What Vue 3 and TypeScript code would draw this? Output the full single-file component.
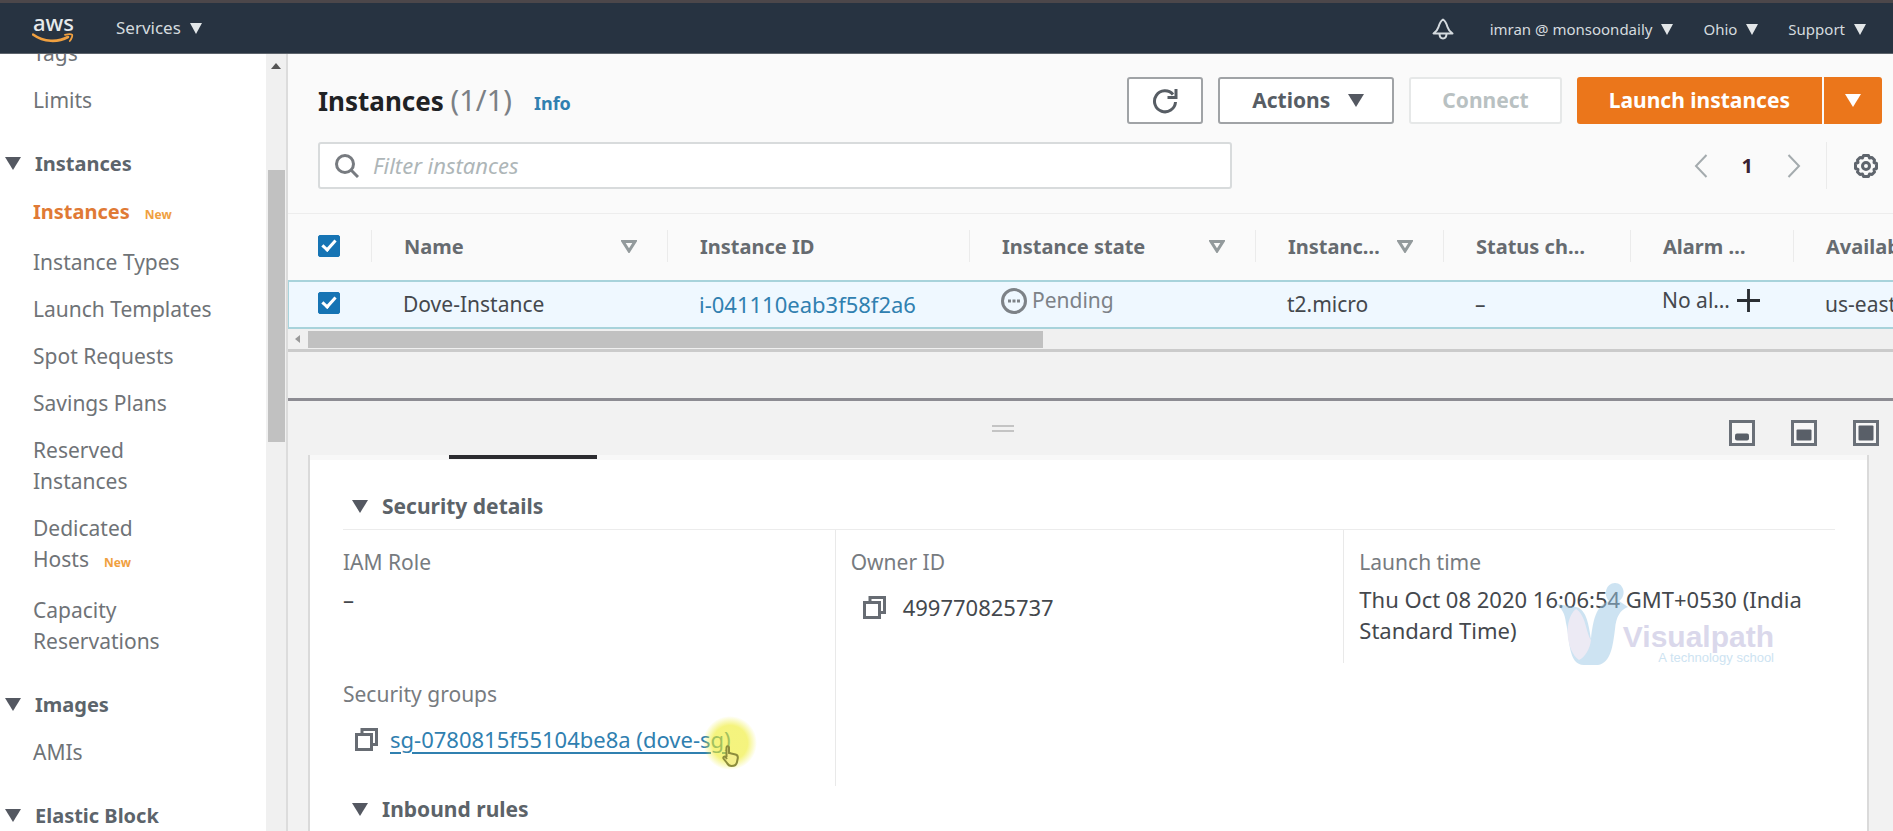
<script setup lang="ts">
import { ref } from 'vue'

interface NavItem {
  label: string
  active?: boolean
  isNew?: boolean
}
interface NavGroup {
  title?: string
  items: NavItem[]
}
interface Column {
  key: string
  label: string
  sortable?: boolean
}

const navGroups: NavGroup[] = [
  { items: [{ label: 'Tags' }, { label: 'Limits' }] },
  {
    title: 'Instances',
    items: [
      { label: 'Instances', active: true, isNew: true },
      { label: 'Instance Types' },
      { label: 'Launch Templates' },
      { label: 'Spot Requests' },
      { label: 'Savings Plans' },
      { label: 'Reserved Instances' },
      { label: 'Dedicated Hosts', isNew: true },
      { label: 'Capacity Reservations' },
    ],
  },
  { title: 'Images', items: [{ label: 'AMIs' }] },
  { title: 'Elastic Block', items: [] },
]

const accountMenus: string[] = ['imran @ monsoondaily', 'Ohio', 'Support']

const columns: Column[] = [
  { key: 'name', label: 'Name', sortable: true },
  { key: 'id', label: 'Instance ID' },
  { key: 'state', label: 'Instance state', sortable: true },
  { key: 'type', label: 'Instanc…', sortable: true },
  { key: 'status', label: 'Status ch…' },
  { key: 'alarm', label: 'Alarm …' },
  { key: 'zone', label: 'Availability Zone' },
]

const filter = ref('')
const allSelected = ref(true)
const rowSelected = ref(true)
</script>

<template>
  <div class="app">
    <header class="topbar">
      <a class="logo" href="#" aria-label="AWS home">
        <span class="logo-text">aws</span>
        <svg class="logo-smile" viewBox="0 0 42 11" aria-hidden="true">
          <path d="M1 1.5C12 9.500 26 9.500 36 4" fill="none" stroke="#f0a040" stroke-width="2.600" stroke-linecap="round" />
          <path d="M33 1.800C36 1 39 .8 40 1.600C40.800 2.600 39.500 6 37.800 8" fill="none" stroke="#f0a040" stroke-width="1.800" stroke-linecap="round" />
        </svg>
      </a>
      <button class="menu services" type="button">Services<svg class="caret" viewBox="0 0 12 11"><path d="M0 0H12L6 11Z" /></svg></button>
      <div class="account">
        <button class="bell" type="button" aria-label="Notifications">
          <svg viewBox="0 0 22 22" fill="none" stroke="currentColor" stroke-width="2" stroke-linejoin="round">
            <path d="M11 1.500C8.500 3 7.500 5.500 6.500 9C5.800 11.500 3.500 14 1.500 15.500H20.500C18.500 14 16.200 11.500 15.500 9C14.500 5.500 13.500 3 11 1.500Z" />
            <path d="M7.500 15.500C7.500 22 14.500 22 14.500 15.500" />
          </svg>
        </button>
        <button v-for="m in accountMenus" :key="m" class="menu" type="button">{{ m }}<svg class="caret" viewBox="0 0 12 11"><path d="M0 0H12L6 11Z" /></svg></button>
      </div>
    </header>

    <div class="body">
      <aside class="sidebar">
        <nav class="nav" aria-label="EC2">
          <section v-for="(g, i) in navGroups" :key="i" class="nav-group">
            <button v-if="g.title" class="nav-title" type="button">
              <svg class="tri" viewBox="0 0 16 13"><path d="M0 0H16L8 13Z" /></svg>{{ g.title }}
            </button>
            <ul v-if="g.items.length">
              <li v-for="item in g.items" :key="item.label" :class="{ fresh: item.isNew }">
                <a href="#" :class="{ active: item.active }">{{ item.label }}</a>
                <span v-if="item.isNew" class="new">New</span>
              </li>
            </ul>
          </section>
        </nav>
        <div class="vscroll" aria-hidden="true">
          <svg viewBox="0 0 10 6"><path d="M0 6H10L5 0Z" /></svg>
          <div class="vthumb"></div>
        </div>
      </aside>

      <main class="main">
        <section class="list">
          <div class="toolbar">
            <div class="row">
              <h1>Instances <span>(1/1)</span></h1>
              <a class="info" href="#">Info</a>
              <div class="actions">
                <button class="btn refresh" type="button" aria-label="Refresh">
                  <svg viewBox="0 0 26 26" fill="none" stroke="currentColor" stroke-width="3">
                    <path d="M23.500 14A10.500 10.500 0 1 1 21 6.500" />
                    <path d="M24 1V9.500H15.500" />
                  </svg>
                </button>
                <button class="btn" type="button">Actions<svg class="tri" viewBox="0 0 16 13"><path d="M0 0H16L8 13Z" /></svg></button>
                <button class="btn" type="button" disabled>Connect</button>
                <div class="split">
                  <button class="launch" type="button">Launch instances</button>
                  <button class="launch more" type="button" aria-label="More launch options"><svg class="tri" viewBox="0 0 16 13"><path d="M0 0H16L8 13Z" /></svg></button>
                </div>
              </div>
            </div>
            <div class="row">
              <label class="search">
                <svg viewBox="0 0 24 24" fill="none" stroke="currentColor" stroke-width="3">
                  <circle cx="10" cy="10" r="8.500" /><path d="M16 16L23 23" />
                </svg>
                <input v-model="filter" type="text" placeholder="Filter instances" aria-label="Filter instances" />
              </label>
              <div class="pager">
                <button type="button" aria-label="Previous page"><svg class="chev" viewBox="0 0 14 24"><path d="M12.500 1L2 12L12.500 23" /></svg></button>
                <button class="page" type="button">1</button>
                <button type="button" aria-label="Next page"><svg class="chev" viewBox="0 0 14 24"><path d="M1.500 1L12 12L1.500 23" /></svg></button>
                <span class="vline"></span>
                <button class="gear" type="button" aria-label="Preferences">
                  <svg viewBox="0 0 26 26" fill="none" stroke="currentColor">
                    <path stroke-width="3" stroke-linejoin="round" d="M10.500 2.500H15.500L16.500 5L19 4.500L21.500 7L21 9.500L23.500 10.500V15.500L21 16.500L21.500 19L19 21.500L16.500 21L15.500 23.500H10.500L9.500 21L7 21.500L4.500 19L5 16.500L2.500 15.500V10.500L5 9.500L4.500 7L7 4.500L9.500 5Z" />
                    <circle cx="13" cy="13" r="3.500" stroke-width="3" />
                  </svg>
                </button>
              </div>
            </div>
          </div>

          <div class="table-wrap">
            <table>
              <colgroup>
                <col class="c-check" />
                <col v-for="c in columns" :key="c.key" :class="'c-' + c.key" />
              </colgroup>
              <thead>
                <tr>
                  <th class="check"><div class="th"><input v-model="allSelected" type="checkbox" aria-label="Select all instances" /></div></th>
                  <th v-for="c in columns" :key="c.key" scope="col">
                    <div class="th">
                      <span>{{ c.label }}</span>
                      <svg v-if="c.sortable" class="sort" viewBox="0 0 16 13"><path d="M2 1.500H14L8 11Z" /></svg>
                    </div>
                  </th>
                </tr>
              </thead>
              <tbody>
                <tr>
                  <td class="check"><input v-model="rowSelected" type="checkbox" aria-label="Select Dove-Instance" /></td>
                  <td>Dove-Instance</td>
                  <td><a class="numeric" href="#">i-041110eab3f58f2a6</a></td>
                  <td class="with-icon">
                    <div class="state">
                      <svg viewBox="0 0 26 26"><circle cx="13" cy="13" r="11.500" fill="none" stroke="currentColor" stroke-width="3" /><path d="M7 11.500h3v3H7zM11.500 11.500h3v3h-3zM16 11.500h3v3h-3z" fill="currentColor" /></svg>
                      Pending
                    </div>
                  </td>
                  <td>t2.micro</td>
                  <td>–</td>
                  <td class="with-icon">
                    <div class="alarm">
                      No al…
                      <button type="button" aria-label="Add alarm"><svg viewBox="0 0 24 24"><path d="M12 0V24M0 12H24" /></svg></button>
                    </div>
                  </td>
                  <td>us-east-2b</td>
                </tr>
              </tbody>
            </table>
          </div>
          <div class="hscroll" aria-hidden="true">
            <svg viewBox="0 0 5 8"><path d="M5 0V8L0 4Z" /></svg>
            <div class="hthumb"></div>
          </div>
        </section>

        <div class="gap"></div>

        <section class="panel">
          <div class="panel-bar">
            <span class="grip"></span>
            <div class="layouts">
              <button type="button" aria-label="Small panel"><svg viewBox="0 0 26 26"><rect class="frame" x="1.500" y="1.500" width="23" height="23" /><rect x="6" y="13.500" width="14" height="7" rx="2" /></svg></button>
              <button type="button" aria-label="Medium panel"><svg viewBox="0 0 26 26"><rect class="frame" x="1.500" y="1.500" width="23" height="23" /><rect x="5.500" y="9.500" width="15" height="11" rx="1" /></svg></button>
              <button type="button" aria-label="Full panel"><svg viewBox="0 0 26 26"><rect class="frame" x="1.500" y="1.500" width="23" height="23" /><rect x="5.500" y="5.500" width="15" height="15" rx="1" /></svg></button>
            </div>
          </div>

          <div class="card">
            <div class="tabs"><span class="tab-mark"></span></div>
            <div class="card-body">
              <button class="section-title" type="button"><svg class="tri" viewBox="0 0 16 13"><path d="M0 0H16L8 13Z" /></svg>Security details</button>
              <dl class="details">
                <div class="cell">
                  <dt>IAM Role</dt>
                  <dd>–</dd>
                </div>
                <div class="cell ruled">
                  <dt>Owner ID</dt>
                  <dd class="copyable">
                    <button type="button" aria-label="Copy owner ID"><svg viewBox="0 0 23 23"><path d="M7 6V1.500H21.500V16.500H17" /><rect x="1.500" y="6.500" width="15" height="15" /></svg></button>
                    499770825737
                  </dd>
                </div>
                <div class="cell ruled">
                  <dt>Launch time</dt>
                  <dd>Thu Oct 08 2020 16:06:54 GMT+0530 (India Standard Time)</dd>
                </div>
                <div class="cell last">
                  <dt>Security groups</dt>
                  <dd class="copyable">
                    <button type="button" aria-label="Copy security group"><svg viewBox="0 0 23 23"><path d="M7 6V1.500H21.500V16.500H17" /><rect x="1.500" y="6.500" width="15" height="15" /></svg></button>
                    <span class="pointed">
                      <a href="#">sg-0780815f55104be8a (dove-sg)</a>
                      <span class="glow"></span>
                      <svg class="hand" viewBox="0 0 17 22"><path d="M4.500 12V2.500C4.500 .8 7 .8 7 2.500V8L13.500 9.500C15.500 10 16 11 15.800 13L15 17C14.500 20 12 21 9.500 21C7 21 6 20 5 18L1.500 13.500C.8 12 2.500 11 3.500 12L5 14" /></svg>
                    </span>
                  </dd>
                </div>
                <div class="cell last ruled"></div>
              </dl>
              <button class="section-title next" type="button"><svg class="tri" viewBox="0 0 16 13"><path d="M0 0H16L8 13Z" /></svg>Inbound rules</button>
            </div>
          </div>
        </section>

        <div class="watermark">
          <svg viewBox="0 0 72 82">
            <path fill="#9cc8e6" d="M0 21C6 25 9 31 10 40C14 56 12 82 28 82H42C55 80 57 62 59 46C60 34 64 27 72 24C69 22 66 20 63 18C71 13 68 0 59 0C50 0 47 12 53 18C40 22 37 38 35 56C33 44 31 26 20 24Z" />
            <path fill="#dbd6ea" d="M20 26C30 32 30 50 35 57C34 66 29 74 23 77C10 68 7 36 20 26Z" />
          </svg>
          <div class="wm-text">
            <strong>Visualpath</strong>
            <small>A technology school</small>
          </div>
        </div>
      </main>
    </div>
  </div>
</template>

<style>
body {
  margin: 0;
  overflow: hidden;
}
</style>

<style scoped>
.app {
  height: 100vh;
  display: flex;
  flex-direction: column;
  overflow: hidden;
  font-family: "Noto Sans", "Open Sans", sans-serif;
  font-size: 21px;
  line-height: 31px;
  color: #44484d;
  background: #f2f2f2;
}
button {
  font: inherit;
  color: inherit;
  padding: 0;
  border: 0;
  background: none;
  display: flex;
  align-items: center;
}
a {
  color: #3080b0;
  text-decoration: none;
}
svg {
  display: block;
  flex: none;
}
.tri {
  width: 16px;
  height: 13px;
  fill: #545861;
}

/* top bar */
.topbar {
  flex: none;
  height: 50px;
  display: flex;
  align-items: center;
  padding: 0 27px 0 32px;
  border-top: 3px solid #4c474a;
  border-bottom: 1px solid #5d646c;
  background: #273341;
  color: #d5dbdf;
  font-size: 15px;
  line-height: 22px;
}
.logo {
  width: 43px;
  color: #e6eaec;
}
.logo-text {
  display: block;
  font-size: 22px;
  font-weight: 500;
  line-height: 18px;
  text-align: center;
  padding-bottom: 2px;
}
.logo-smile {
  width: 42px;
  height: 11px;
}
.menu {
  gap: 9px;
}
.services {
  margin-left: 41px;
  font-size: 17px;
}
.caret {
  width: 12px;
  height: 11px;
  fill: #e2e6e8;
}
.account {
  margin-left: auto;
  padding-top: 2px;
  display: flex;
  align-items: center;
  gap: 30px;
}
.bell {
  margin-right: 6px;
}
.bell svg {
  width: 22px;
  height: 22px;
}

/* layout */
.body {
  flex: 1;
  min-height: 0;
  display: flex;
}
.sidebar {
  flex: none;
  width: 286px;
  display: flex;
  overflow: hidden;
  background: #fff;
  border-right: 2px solid #dcdcdc;
}
.nav {
  flex: 1;
  margin-top: -16px;
  display: flex;
  flex-direction: column;
  gap: 32px;
  color: #6f7377;
}
.nav ul {
  list-style: none;
  margin: 0;
  padding: 0 50px 0 33px;
  display: flex;
  flex-direction: column;
  gap: 16px;
}
.nav a {
  color: inherit;
}
.nav .fresh {
  padding-bottom: 4px;
}
.nav a.active {
  color: #e07a35;
  font-size: 20px;
  font-weight: 700;
}
.new {
  margin-left: 15px;
  font-size: 12px;
  font-weight: 700;
  line-height: 12px;
  color: #f0a040;
}
.nav-title {
  margin: 0 0 17px 5px;
  gap: 14px;
  font-size: 20px;
  font-weight: 700;
  color: #5c646b;
}
.vscroll {
  flex: none;
  width: 20px;
  background: #f0f0f0;
  display: flex;
  flex-direction: column;
  align-items: center;
  padding-top: 9px;
  box-sizing: border-box;
}
.vscroll svg {
  width: 10px;
  height: 6px;
  fill: #555;
}
.vthumb {
  flex: 0 0 272px;
  width: 17px;
  margin-top: 101px;
  background: #c1c1c1;
}
.main {
  flex: 1;
  min-width: 0;
  position: relative;
  display: flex;
  flex-direction: column;
}

/* list pane */
.list {
  flex: none;
  background: #fafafa;
  border-bottom: 3px solid #cbcbcb;
}
.toolbar {
  padding: 23px 11px 24px 30px;
  display: flex;
  flex-direction: column;
  gap: 18px;
}
.row {
  display: flex;
  align-items: center;
}
h1 {
  margin: 0;
  font-size: 26px;
  font-weight: 700;
  color: #1f2225;
}
h1 span {
  font-size: 29px;
  font-weight: 400;
  color: #7b8085;
}
.info {
  margin: 6px 0 0 22px;
  font-size: 18px;
  font-weight: 700;
}
.actions {
  margin-left: auto;
  display: flex;
  gap: 15px;
}
.btn {
  box-sizing: border-box;
  height: 47px;
  padding: 0 28px 0 32px;
  gap: 18px;
  border: 2px solid #a0a3a6;
  border-radius: 3px;
  background: #fff;
  font-weight: 700;
  color: #575d64;
}
.btn:disabled {
  padding: 0 31px;
  border-color: #e6e8e8;
  color: #b9c1c2;
}
.refresh {
  padding: 0 23px;
}
.refresh svg {
  width: 26px;
  height: 26px;
}
.split {
  display: flex;
  gap: 2px;
}
.launch {
  height: 47px;
  padding: 0 32px;
  border-radius: 3px 0 0 3px;
  background: #eb761b;
  color: #fff;
  font-weight: 700;
}
.launch.more {
  padding: 0 21px;
  border-radius: 0 3px 3px 0;
}
.launch .tri {
  fill: #fff;
}
.search {
  box-sizing: border-box;
  flex: 1;
  max-width: 914px;
  height: 47px;
  display: flex;
  align-items: center;
  gap: 14px;
  padding: 0 15px;
  border: 2px solid #d8dbdc;
  border-radius: 3px;
  background: #fff;
  color: #777b80;
}
.search svg {
  width: 24px;
  height: 24px;
}
.search input {
  flex: 1;
  min-width: 0;
  border: 0;
  padding: 0;
  outline: 0;
  background: none;
  font: inherit;
  font-size: 22px;
  color: #44484d;
}
.search input::placeholder {
  font-style: italic;
  color: #aeb6b8;
  opacity: 1;
}
.pager {
  margin-left: auto;
  padding-right: 3px;
  display: flex;
  align-items: center;
}
.chev {
  width: 14px;
  height: 24px;
  fill: none;
  stroke: #a4abae;
  stroke-width: 2;
}
.page {
  margin: 0 34px;
  font-size: 20px;
  font-weight: 700;
  color: #3a2232;
}
.vline {
  width: 1px;
  height: 47px;
  margin: 0 26px 0 25px;
  background: #ebebeb;
}
.gear svg {
  width: 26px;
  height: 26px;
  color: #5f656d;
}

/* table */
.table-wrap {
  overflow: hidden;
  border-top: 1px solid #ededed;
}
table {
  width: 100%;
  table-layout: fixed;
  border-spacing: 0;
}
.c-check { width: 84px; }
.c-name { width: 296px; }
.c-id { width: 302px; }
.c-state { width: 286px; }
.c-type { width: 188px; }
.c-status { width: 187px; }
.c-alarm { width: 163px; }
th,
td {
  padding: 0;
  text-align: left;
  white-space: nowrap;
  overflow: hidden;
}
th {
  height: 64px;
  padding-bottom: 2px;
  font-size: 20px;
  color: #666b70;
}
.th {
  height: 32px;
  display: flex;
  align-items: center;
  justify-content: space-between;
  padding: 0 30px 0 32px;
  border-right: 1px solid #ebebeb;
}
th:last-child .th {
  border: 0;
}
th.check .th,
td.check {
  padding-left: 30px;
}
.sort {
  width: 16px;
  height: 13px;
  fill: none;
  stroke: #939a9c;
  stroke-width: 3;
}
td {
  height: 45px;
  padding-left: 31px;
  border-top: 2px solid #a8d3db;
  border-bottom: 2px solid #a8d3db;
  background: #eff8ff;
}
td.check {
  height: 41px;
  border-left: 1px solid #a8d3db;
  padding-left: 29px;
  padding-bottom: 4px;
}
td.with-icon {
  height: 37px;
  padding-bottom: 8px;
}
.numeric {
  font-size: 22px;
}
input[type="checkbox"] {
  appearance: none;
  display: block;
  width: 22px;
  height: 22px;
  margin: 0;
  border: 1px solid #1674b4;
  border-radius: 2px;
  background: #fff;
}
input[type="checkbox"]:checked {
  background: #1674b4;
}
input[type="checkbox"]:checked::after {
  content: "";
  display: block;
  width: 5px;
  height: 11px;
  margin: 1px 0 0 6px;
  border: solid #fff;
  border-width: 0 3px 3px 0;
  transform: rotate(42deg);
}
.state {
  display: flex;
  align-items: center;
  gap: 5px;
  color: #7d8287;
}
.state svg {
  width: 26px;
  height: 26px;
}
.alarm {
  display: flex;
  align-items: center;
  gap: 7px;
}
.alarm svg {
  width: 23px;
  height: 23px;
  stroke: #2a2e33;
  stroke-width: 3;
}
.hscroll {
  height: 20px;
  display: flex;
  align-items: center;
  gap: 8px;
  padding-left: 7px;
  background: #f0f0f0;
}
.hscroll svg {
  width: 5px;
  height: 8px;
  fill: #999;
}
.hthumb {
  width: 46%;
  height: 17px;
  background: #c1c1c1;
}
.gap {
  flex: none;
  height: 46px;
}

/* details panel */
.panel {
  flex: 1;
  min-height: 0;
  display: flex;
  flex-direction: column;
  border-top: 3px solid #8d8c93;
  padding: 0 24px 0 20px;
}
.panel-bar {
  flex: none;
  height: 54px;
  display: grid;
  grid-template-columns: 1fr auto 1fr;
  align-items: center;
  margin-right: -10px;
}
.grip {
  grid-column: 2;
  width: 22px;
  height: 3px;
  margin-right: 182px;
  border: solid #c4c4c4;
  border-width: 2px 0;
}
.layouts {
  justify-self: end;
  display: flex;
  gap: 36px;
  padding-top: 10px;
}
.layouts svg {
  width: 26px;
  height: 26px;
  fill: #595f68;
}
.layouts .frame {
  fill: #f7f7f7;
  stroke: #6a7078;
  stroke-width: 3;
}
.card {
  flex: 1;
  min-height: 0;
  overflow: hidden;
  border: solid #dadada;
  border-width: 0 2px;
  background: #fff;
}
.tabs {
  height: 5px;
  background: #f8f8f8;
}
.tab-mark {
  display: block;
  width: 148px;
  height: 4px;
  margin-left: 139px;
  background: #2c2c30;
}
.card-body {
  padding: 31px 32px 0 33px;
}
.section-title {
  padding-left: 9px;
  gap: 14px;
  font-size: 21px;
  font-weight: 700;
  color: #5c6369;
}
.details {
  margin: 7px 0 0;
  display: grid;
  grid-template-columns: 29fr 30fr 29fr;
  border-top: 1px solid #ececec;
}
.cell {
  padding: 17px 16px 17px 0;
}
.cell.ruled {
  padding-left: 15px;
  border-left: 1px solid #e9e9e9;
}
.cell.last {
  padding: 16px 16px 31px 0;
}
dt {
  color: #777b7f;
}
dd {
  margin: 6px 0 0;
  font-size: 22px;
}
.copyable {
  margin-top: 14px;
  padding-left: 12px;
  display: flex;
  align-items: center;
  gap: 12px;
}
.copyable svg:not(.hand) {
  width: 23px;
  height: 23px;
  margin-right: 5px;
  fill: none;
  stroke: #676c73;
  stroke-width: 3;
}
.last .copyable {
  gap: 7px;
}
.pointed {
  position: relative;
}
.pointed a {
  text-decoration: underline;
  text-decoration-thickness: 2px;
  text-underline-offset: 4px;
}
.glow {
  position: absolute;
  right: -26px;
  top: -8px;
  width: 54px;
  height: 54px;
  border-radius: 50%;
  background: radial-gradient(circle closest-side, rgba(238, 236, 40, 0.6) 65%, rgba(238, 236, 40, 0) 100%);
}
.hand {
  position: absolute;
  right: -8px;
  top: 21px;
  width: 17px;
  height: 22px;
  fill: #f4ef8a;
  stroke: #8c8c3c;
  stroke-width: 2;
}
.next {
  margin-top: 8px;
}

/* watermark */
.watermark {
  position: absolute;
  right: 119px;
  top: 529px;
  display: flex;
  opacity: 0.5;
  pointer-events: none;
}
.watermark svg {
  width: 72px;
  height: 82px;
}
.wm-text {
  display: flex;
  flex-direction: column;
  align-items: flex-end;
  margin-left: -5px;
  padding-top: 40px;
  font-family: "Liberation Sans", Arial, sans-serif;
}
.wm-text strong {
  font-size: 30px;
  line-height: 28px;
  color: #b6b2d8;
}
.wm-text small {
  font-size: 13px;
  line-height: 14px;
  color: #9cc8e6;
}
</style>
